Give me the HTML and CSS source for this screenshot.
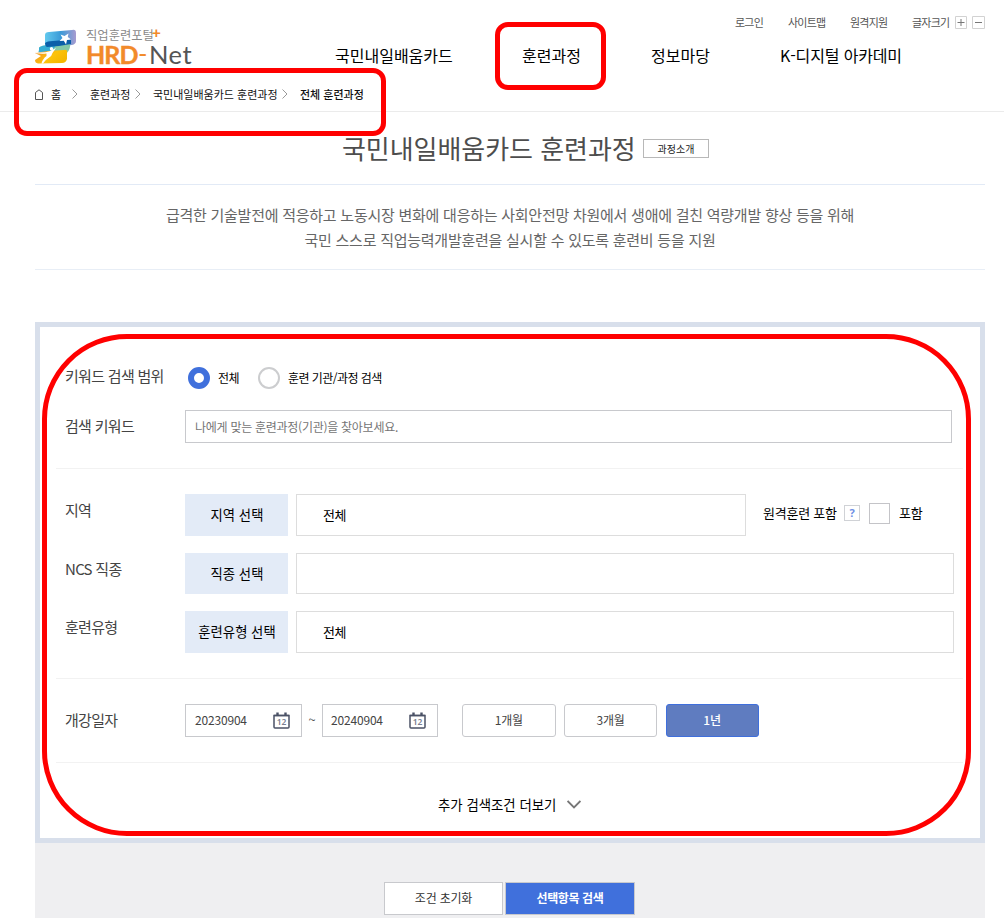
FILE: index.html
```html
<!DOCTYPE html>
<html lang="ko">
<head>
<meta charset="utf-8">
<title>국민내일배움카드 훈련과정</title>
<link rel="stylesheet" href="styles.css">
</head>
<body>
<header class="header">
  <div class="logo">
    <svg class="logo-mark" width="43" height="36" viewBox="0 0 43 36">
      <defs>
        <linearGradient id="sky" x1="0" x2="1"><stop offset="0" stop-color="#62c9ee"/><stop offset=".5" stop-color="#3b9bd8"/><stop offset="1" stop-color="#a79bd0"/></linearGradient>
        <linearGradient id="sun" x1="0" x2="1" y1="0" y2=".5"><stop offset="0" stop-color="#f08a24"/><stop offset=".6" stop-color="#fcc30b"/><stop offset="1" stop-color="#f5b800"/></linearGradient>
      </defs>
      <path d="M10 6Q10 3 14 3L37 1Q41 0 41 4V12Q41 15 37 16L14 18Q10 18 10 15Z" fill="url(#sky)"/>
      <path d="M4 19Q5 17 10 16.500L32 15Q36 14 35 18Q34 23 31 24L5 26Q3 25 4 21Z" fill="#84c9a8"/>
      <path d="M4 19Q5 17 10 16.500L22 15L15 25L5 26Q3 25 4 21Z" fill="#35add4"/>
      <path d="M10 14Q12 12 18 12L36 10.500V15L24 17L12 18Q10 17 10 14Z" fill="#0b5fa9"/>
      <path d="M0 24L13 22L29 21Q33 20 32 25V30Q31 34 27 34L3 34.500Q0 34 0 31L6 27Z" fill="url(#sun)"/>
      <path d="M33.500 4.500L32.800 8L36 10.500L32 11L31 15.500L28.800 11.800L24.500 12L27.500 9L25.500 5.500L29.500 7Z" fill="#fff"/>
      <circle cx="16.500" cy="19.800" r="1.700" fill="#fff"/>
      <path d="M1 23.200Q9 24 14.500 22.200L21 19L17.500 24Q17 27 13.500 29Q10 31 8 34.500L6.500 34.500Q7.500 30 11.500 27L11.500 24.500Q6 25 1 24.200Z" fill="#fff"/>
    </svg>
    <div class="logo-text">
      <div class="logo-sub">직업훈련포털<span class="logo-plus">+</span></div>
      <div class="logo-name"><b>HRD</b><i>-</i><span>Net</span></div>
    </div>
  </div>
  <div class="menus">
    <div class="util">
      <a class="u1">로그인</a><a class="u2">사이트맵</a><a class="u3">원격지원</a><span class="u4">글자크기</span>
      <svg width="30" height="13" viewBox="0 0 30 13" fill="none"><path d="M.5.5h11v12H.5zM17.500.5h12v12h-12z" stroke="#d2d2d2"/><path d="M2.500 6.500h7M6 3v7M20 6.500h7" stroke="#777"/></svg>
    </div>
    <nav class="nav"><a class="n1">국민내일배움카드</a><a class="n2">훈련과정</a><a class="n3">정보마당</a><a class="n4">K-디지털 아카데미</a></nav>
  </div>
</header>
<div class="crumbs">
  <svg width="8" height="11" viewBox="0 0 8 11" fill="none" stroke="#555"><path d="M.5 3.500L4 .8L7.500 3.500V10.500H.5Z"/></svg>
  <span class="c1">홈</span>
  <svg class="sep" width="6" height="10" viewBox="0 0 6 10"><path d="M.5.5L5 5L.5 9.500"/></svg>
  <span class="c2">훈련과정</span>
  <svg class="sep" width="6" height="10" viewBox="0 0 6 10"><path d="M.5.5L5 5L.5 9.500"/></svg>
  <span class="c3">국민내일배움카드 훈련과정</span>
  <svg class="sep" width="6" height="10" viewBox="0 0 6 10"><path d="M.5.5L5 5L.5 9.500"/></svg>
  <strong class="c4">전체 훈련과정</strong>
</div>
<main class="main">
  <div class="title"><h1>국민내일배움카드 훈련과정</h1><a class="intro">과정소개</a></div>
  <p class="desc">급격한 기술발전에 적응하고 노동시장 변화에 대응하는 사회안전망 차원에서 생애에 걸친 역량개발 향상 등을 위해<br>국민 스스로 직업능력개발훈련을 실시할 수 있도록 훈련비 등을 지원</p>
  <form class="search">
    <section class="group keyword">
      <div class="row range"><span class="label">키워드 검색 범위</span><span class="radio on"></span><span class="opt">전체</span><span class="radio second"></span><span class="opt">훈련 기관/과정 검색</span></div>
      <div class="row kw"><span class="label">검색 키워드</span><div class="input">나에게 맞는 훈련과정(기관)을 찾아보세요.</div></div>
    </section>
    <section class="group picks">
      <div class="row r42"><span class="label">지역</span><span class="pick">지역 선택</span><div class="box short">전체</div><span class="remote">원격훈련 포함</span><span class="help">?</span><span class="check"></span><span class="inc">포함</span></div>
      <div class="row r41"><span class="label">NCS 직종</span><span class="pick">직종 선택</span><div class="box"></div></div>
      <div class="row r42"><span class="label">훈련유형</span><span class="pick">훈련유형 선택</span><div class="box">전체</div></div>
    </section>
    <section class="group dates">
      <div class="row r33"><span class="label">개강일자</span>
        <div class="date d1">20230904<svg class="cal" width="17" height="17" viewBox="0 0 17 17"><path d="M1 3.500h15v11.500q0 1-1 1H2q-1 0-1-1z" fill="#fff" stroke="#4b5266" stroke-width="1.500"/><path d="M1 3.500h15" stroke="#4b5266" stroke-width="1.500"/><path d="M4.500 .5v3M12.500 .5v3" stroke="#4b5266" stroke-width="2.400"/><text x="8.500" y="12.800" text-anchor="middle" class="cal-num">12</text></svg></div>
        <span class="tilde">~</span>
        <div class="date d2">20240904<svg class="cal" width="17" height="17" viewBox="0 0 17 17"><path d="M1 3.500h15v11.500q0 1-1 1H2q-1 0-1-1z" fill="#fff" stroke="#4b5266" stroke-width="1.500"/><path d="M1 3.500h15" stroke="#4b5266" stroke-width="1.500"/><path d="M4.500 .5v3M12.500 .5v3" stroke="#4b5266" stroke-width="2.400"/><text x="8.500" y="12.800" text-anchor="middle" class="cal-num">12</text></svg></div>
        <div class="periods"><span class="period wide">1개월</span><span class="period">3개월</span><span class="period active">1년</span></div>
      </div>
    </section>
    <div class="more">추가 검색조건 더보기<svg width="14" height="9" viewBox="0 0 14 9" fill="none" stroke="#777" stroke-width="1.800"><path d="M.6 1L7 7.500L13.400 1"/></svg></div>
  </form>
  <div class="actions"><span class="btn reset">조건 초기화</span><span class="btn submit">선택항목 검색</span></div>
</main>
<div class="mark mark-path"></div>
<div class="mark mark-nav"></div>
<div class="mark mark-form"></div>
</body>
</html>
```
FILE: styles.css
```css
* { box-sizing: border-box; }
body { margin: 0; position: relative; width: 1004px; height: 921px; overflow: hidden; background: #fff; color: #000; font: 13px/20px "Noto Sans CJK KR", sans-serif; }
svg { display: block; flex: none; }
span, a { white-space: nowrap; }

.header { display: flex; height: 78px; padding-left: 35px; }
.logo { display: flex; width: 300px; padding-top: 29px; }
.logo-text { padding-left: 8px; }
.logo-sub { display: flex; height: 15px; font-size: 12.300px; line-height: 12px; color: #8a8a8a; }
.logo-plus { font: bold 15px/8px "Liberation Sans", sans-serif; color: #f28a2a; margin-left: -2px; }
.logo-name { display: flex; font: 25.500px/20px Lato, sans-serif; color: #555; }
.logo-name b { width: 52px; font-weight: 700; font-size: 25px; letter-spacing: -.9px; color: #f28a2a; -webkit-text-stroke: .4px #f28a2a; }
.logo-name i { width: 11px; font-style: normal; font-weight: 400; line-height: 18px; color: #f28a2a; }
.logo-name span { letter-spacing: .5px; }

.menus { flex: 1; }
.util { display: flex; align-items: center; height: 20px; margin: 12px 0 0 400px; font-size: 11px; letter-spacing: -.8px; color: #555; }
.u1 { width: 53px; }
.u2 { width: 62px; }
.u3 { width: 62px; }
.u4 { width: 43px; }
.util a, .u4 { flex: none; line-height: 20px; }
.nav { display: flex; font-size: 16px; line-height: 24px; margin-top: 11px; }
.n1 { width: 187px; }
.n2 { width: 129px; }
.n3 { width: 129px; }
.n4 { letter-spacing: -.15px; }

.crumbs { display: flex; align-items: center; height: 34px; padding: 0 0 1px 35px; border-bottom: 1px solid #ebebeb; font-size: 11px; color: #111; }
.sep { fill: none; stroke: #999; }
.c1 { width: 21px; margin-left: 8px; }
.c2 { width: 45px; margin-left: 12px; }
.c3 { width: 129px; margin-left: 12px; }
.c4 { margin-left: 12px; font-weight: 500; }

.main { width: 950px; margin: 0 19px 0 35px; }
.title { display: flex; height: 73px; padding-left: 307px; border-bottom: 1px solid #e2eaf6; }
.title h1 { width: 301px; margin: 17px 0 0; font-size: 26px; line-height: 38px; letter-spacing: -.05px; font-weight: 400; color: #4d4d4d; white-space: nowrap; }
.intro { width: 66px; height: 19px; margin-top: 27px; border: 1px solid #b8b8b8; font-size: 10px; line-height: 18px; text-align: center; color: #222; }
.desc { height: 85px; margin: 0; padding-top: 17px; border-bottom: 1px solid #e8eef6; font-size: 15px; line-height: 25px; letter-spacing: -.25px; text-align: center; color: #666; white-space: nowrap; }

.search { height: 521px; margin-top: 52px; padding: 0 17px 0 16px; border: 5px solid #d8dfeb; background: #fff; }
.group { padding: 0 0 0 9px; border-bottom: 1px solid #f2f2f2; }
.row { display: flex; }
.label { width: 120px; flex: none; font-size: 15px; letter-spacing: -.7px; color: #444; }
.keyword { height: 142px; padding-top: 39px; }
.range { height: 44px; }
.radio { width: 22px; height: 22px; flex: none; margin: 1px 8px 0 3px; border: 2px solid #cccdcf; border-radius: 50%; }
.radio.on { border: 6px solid #4070dc; }
.radio.second { margin-left: 19px; }
.range .opt { line-height: 24px; font-size: 12px; letter-spacing: -.55px; }
.kw .label { line-height: 32px; }
.input { width: 767px; height: 33px; padding-left: 9px; border: 1px solid #c8c9cd; font-size: 12px; line-height: 32px; letter-spacing: -.27px; color: #757575; }
.picks { height: 210px; padding-top: 25px; }
.r42 { height: 42px; }
.r41 { height: 41px; margin: 17px 0; }
.picks .label { line-height: 31px; }
.pick { width: 103px; flex: none; margin-right: 8px; padding-left: 1px; background: #e3ebf7; font-size: 13.330px; line-height: 41px; text-align: center; }
.box { width: 658px; flex: none; padding-left: 26px; border: 1px solid #ddd; line-height: 40px; letter-spacing: -.4px; }
.box.short { width: 450px; }
.remote { width: 81px; margin-left: 17px; letter-spacing: -.25px; line-height: 38px; }
.help { width: 16px; height: 16px; margin-top: 11px; border: 1px solid #d0d2d6; font: bold 11px/14px "Noto Sans", sans-serif; text-align: center; color: #6f8fe4; }
.check { width: 21px; height: 21px; margin: 9px 9px 0; border: 1px solid #c4c4c8; }
.inc { line-height: 38px; letter-spacing: -.2px; }
.dates { height: 84px; padding-top: 25px; }
.r33 { height: 33px; }
.dates .label { line-height: 31px; }
.date { display: flex; justify-content: space-between; height: 33px; border: 1px solid #c8c9cd; padding-left: 9px; font-size: 12px; line-height: 30px; letter-spacing: -.18px; color: #444; }
.d1 { width: 117px; padding-right: 11px; }
.d2 { width: 116px; padding-right: 11px; padding-left: 8px; }
.cal { margin-top: 7px; }
.cal-num { font: 600 8.500px "Noto Sans", sans-serif; fill: #7a8090; }
.tilde { width: 20px; line-height: 31px; text-align: center; color: #555; }
.periods { display: flex; gap: 8.500px; margin-left: 24px; }
.period { width: 93px; height: 33px; border: 1px solid #c8c9cd; border-radius: 3px; font-size: 12px; line-height: 30px; text-align: center; color: #444; letter-spacing: -.3px; }
.period.wide { width: 93.500px; }
.period.active { background: #5f7cc0; border-color: #3f6fdc; color: #fff; font-weight: 500; }
.more { display: flex; align-items: center; gap: 11px; height: 82px; padding: 0 0 0 382px; font-size: 13.400px; white-space: nowrap; }

.actions { display: flex; gap: 2px; height: 75px; padding: 39px 0 0 349px; background: #efeff1; }
.btn { height: 33px; border: 1px solid #c8c9cd; font-size: 12px; line-height: 30px; letter-spacing: -.2px; text-align: center; }
.reset { width: 119px; background: #fff; color: #333; }
.submit { width: 130px; background: #4070dc; color: #fff; font-weight: 700; letter-spacing: -.4px; }

.mark { position: absolute; border: 5px solid #f00; pointer-events: none; }
.mark-path { left: 14px; top: 68px; width: 372px; height: 68px; border-radius: 13px; }
.mark-nav { left: 495px; top: 22px; width: 111px; height: 68px; border-radius: 13px; }
.mark-form { left: 42px; top: 334px; width: 929px; height: 502px; border-radius: 85px; }
```
